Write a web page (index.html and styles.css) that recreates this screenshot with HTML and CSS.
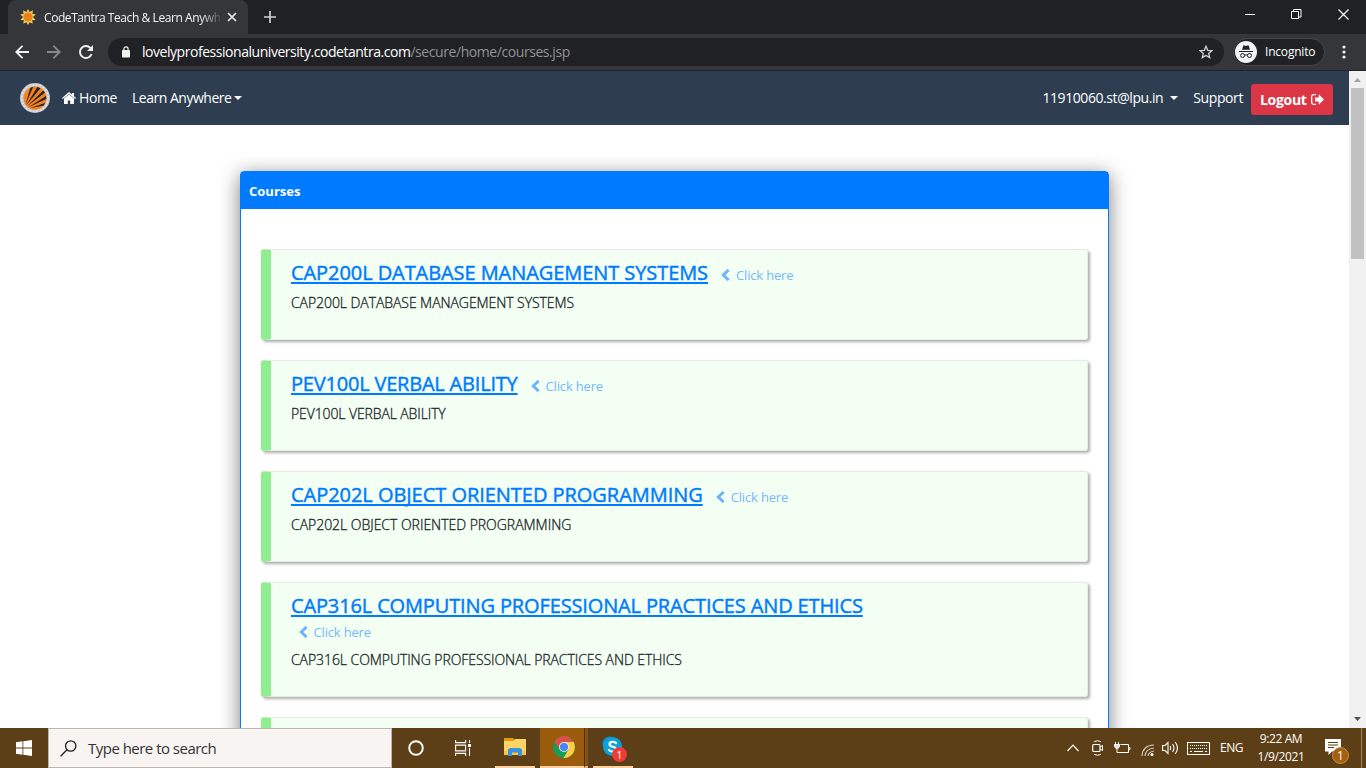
FILE: index.html
```html
<!DOCTYPE html>
<html lang="en">
<head>
<meta charset="utf-8">
<title>CodeTantra Teach &amp; Learn Anywhere</title>
<link rel="stylesheet" href="styles.css">
</head>
<body>
<div class="screen">
  <div class="tabstrip">
    <div class="tab">
      <svg class="favicon" width="16" height="16" viewBox="0 0 16 16"><path fill="#e8cf5a" d="M8 0l1.600 3L13 1.300l-.6 3.500 3.400.8L13 8l2.600 2.900-3.500.4.700 3.400-3.100-1.500L8 16l-1.700-2.800-3.100 1.500.7-3.400-3.500-.4L3 8 .2 5.600l3.400-.8L3 1.300 6.400 3z"/><circle cx="8" cy="8" r="4.600" fill="#ee7f1a"/></svg>
      <span class="tab-title">CodeTantra Teach &amp; Learn Anywh</span>
      <svg class="tab-close" width="10" height="10" viewBox="0 0 10 10"><path d="M1 1l8 8M9 1L1 9" stroke="#f0f0f0" stroke-width="1.700"/></svg>
    </div>
    <svg class="newtab" width="12" height="12" viewBox="0 0 12 12"><path d="M6 0v12M0 6h12" stroke="#d0d1d3" stroke-width="1.700"/></svg>
    <div class="winbtns">
      <svg width="10" height="11" viewBox="0 0 10 11"><path d="M0 5.500h10" stroke="#fff"/></svg>
      <svg width="11" height="11" viewBox="0 0 11 11"><path d="M.5 2.500h7v7h-7zM2.500 2.500v-2h7.500v7.500h-2.500" fill="none" stroke="#fff"/></svg>
      <svg width="11" height="11" viewBox="0 0 11 11"><path d="M.5.5l10 10M10.500.5l-10 10" stroke="#fff" stroke-width="1.200"/></svg>
    </div>
  </div>
  <div class="toolbar">
    <svg class="ic-back" width="14" height="14" viewBox="0 0 14 14"><path d="M14 7H1.500M7.500.8L1.300 7l6.200 6.200" fill="none" stroke="#f1f1f1" stroke-width="1.900"/></svg>
    <svg class="ic-fwd" width="14" height="14" viewBox="0 0 14 14"><path d="M0 7h12.500M6.500.8L12.700 7l-6.200 6.200" fill="none" stroke="#87888b" stroke-width="1.900"/></svg>
    <svg class="ic-reload" width="14" height="14" viewBox="0 0 14 14"><path d="M12.600 9.200A6 6 0 1 1 11.300 2.800l1 1" fill="none" stroke="#f1f1f1" stroke-width="1.900"/><path d="M14 0v6H8z" fill="#f1f1f1"/></svg>
    <div class="omnibox">
      <svg width="8" height="12" viewBox="0 0 8 12"><rect y="4" width="8" height="7.500" rx=".8" fill="#f1f1f1"/><path d="M1.900 4.500V2.900a2.100 2.100 0 0 1 4.200 0v1.600" fill="none" stroke="#f1f1f1" stroke-width="1.200"/></svg>
      <span class="url"><span class="host">lovelyprofessionaluniversity.codetantra.com</span><span class="path">/secure/home/courses.jsp</span></span>
      <svg class="star" width="14" height="14" viewBox="0 0 14 14"><path d="M7 1.300l1.700 4 4.300.3-3.300 2.800 1 4.200L7 10.400l-3.700 2.200 1-4.200L1 5.600l4.300-.3z" fill="none" stroke="#d2d3d5" stroke-width="1.300"/></svg>
    </div>
    <div class="incognito">
      <svg width="22" height="22" viewBox="0 0 22 22"><circle cx="11" cy="11" r="11" fill="#f1f3f4"/><path fill="#202124" d="M7 8.800l1.300-4c.2-.5.600-.6 1-.4l1.700.6 1.700-.6c.4-.2.800-.1 1 .4l1.300 4zM4 10h14v1H4z"/><g fill="none" stroke="#202124" stroke-width="1"><circle cx="7.600" cy="14.500" r="2"/><circle cx="14.400" cy="14.500" r="2"/><path d="M9.600 14.200q1.400-.8 2.800 0"/></g></svg>
      <span>Incognito</span>
    </div>
    <svg class="dots" width="4" height="14" viewBox="0 0 4 14" fill="#f1f1f1"><circle cx="2" cy="2" r="1.600"/><circle cx="2" cy="7" r="1.600"/><circle cx="2" cy="12" r="1.600"/></svg>
  </div>

  <div class="viewport">
    <div class="page">
      <nav class="navbar">
        <svg class="logo" width="30" height="30" viewBox="0 0 30 30"><circle cx="15" cy="15" r="15" fill="#c9c9ca"/><circle cx="15" cy="15" r="13.300" fill="none" stroke="#e4e4e4" stroke-width="1.500" stroke-dasharray="2 1.500"/><circle cx="15" cy="15" r="11.500" fill="#f58220"/><g fill="#2a2324"><path d="M5.500 21.500L10.300 5l3-1.200z"/><path d="M6 22.500L17.300 4l3.200 1.200z"/><path d="M6.800 23.500L23.200 7.500l1.700 2.300z"/><path d="M8 24.500L26 13l.3 3z"/><path d="M10 25.200l15.300-5.400-1.500 2.600z"/></g></svg>
        <a class="home"><svg width="14" height="12" viewBox="0 0 14 12" fill="#fff"><path d="M7 0l3 2.500V1h2v3.200L14 6l-.8.900L7 1.900.8 6.900 0 6z"/><path d="M7 2.600l5 4V12H8.200V8.500H5.800V12H2V6.600z"/></svg><span class="t-home">Home</span></a>
        <a class="learn"><span class="t-learn">Learn Anywhere</span><i class="caret"></i></a>
        <a class="user"><span class="t-user">11910060.st@lpu.in</span><i class="caret"></i></a>
        <a class="support">Support</a>
        <a class="logout"><span>Logout</span><svg width="13" height="11" viewBox="0 0 13 11"><path d="M5 .7H2.500A1.800 1.800 0 0 0 .7 2.500v6a1.800 1.800 0 0 0 1.800 1.800H5" fill="none" stroke="#fff" stroke-width="1.300"/><path fill="#fff" d="M13 5.500L7.700.2v3.200H4v4.200h3.700v3.200z"/></svg></a>
      </nav>
      <main class="card">
        <h1 class="card-head">Courses</h1>
        <div class="card-body">
          <section class="course"><div class="row"><a class="title c1">CAP200L DATABASE MANAGEMENT SYSTEMS</a><span class="hint"><svg width="9" height="12" viewBox="0 0 9 12"><path d="M7.600.9L2.300 6l5.300 5.100" fill="none" stroke="#70b3fa" stroke-width="2.900"/></svg><span>Click here</span></span></div><p class="d1">CAP200L DATABASE MANAGEMENT SYSTEMS</p></section>
          <section class="course"><div class="row"><a class="title c2">PEV100L VERBAL ABILITY</a><span class="hint"><svg width="9" height="12" viewBox="0 0 9 12"><path d="M7.600.9L2.300 6l5.300 5.100" fill="none" stroke="#70b3fa" stroke-width="2.900"/></svg><span>Click here</span></span></div><p class="d2">PEV100L VERBAL ABILITY</p></section>
          <section class="course"><div class="row"><a class="title c3">CAP202L OBJECT ORIENTED PROGRAMMING</a><span class="hint"><svg width="9" height="12" viewBox="0 0 9 12"><path d="M7.600.9L2.300 6l5.300 5.100" fill="none" stroke="#70b3fa" stroke-width="2.900"/></svg><span>Click here</span></span></div><p class="d3">CAP202L OBJECT ORIENTED PROGRAMMING</p></section>
          <section class="course tall"><div class="row"><a class="title c4">CAP316L COMPUTING PROFESSIONAL PRACTICES AND ETHICS</a></div><div class="hint wrapped"><svg width="9" height="12" viewBox="0 0 9 12"><path d="M7.600.9L2.300 6l5.300 5.100" fill="none" stroke="#70b3fa" stroke-width="2.900"/></svg><span>Click here</span></div><p class="d4">CAP316L COMPUTING PROFESSIONAL PRACTICES AND ETHICS</p></section>
          <section class="course"></section>
        </div>
      </main>
    </div>
    <div class="scrollbar">
      <svg width="17" height="17" viewBox="0 0 17 17"><path d="M5 11l3.500-4 3.500 4z" fill="#a3a3a3"/></svg>
      <div class="thumb"></div>
      <svg class="down" width="17" height="17" viewBox="0 0 17 17"><path d="M5 6l3.500 4L12 6z" fill="#505050"/></svg>
    </div>
  </div>

  <div class="taskbar">
    <div class="start"><svg width="16" height="16" viewBox="0 0 16 16" fill="#fff"><path d="M0 2.200L6.500 1.300v6.200H0zM7.300 1.200L16 0v7.500H7.300zM0 8.400h6.500v6.300L0 13.800zM7.300 8.400H16V16l-8.700-1.200z"/></svg></div>
    <div class="search"><svg width="17" height="17" viewBox="0 0 17 17"><circle cx="10.700" cy="6" r="5.200" fill="none" stroke="#222" stroke-width="1.300"/><path d="M7 9.700L.6 16.200" stroke="#222" stroke-width="1.300"/></svg><span>Type here to search</span></div>
    <div class="app w48"><svg width="16" height="16" viewBox="0 0 16 16"><circle cx="8" cy="8" r="6.800" fill="none" stroke="#fff" stroke-width="1.900"/></svg></div>
    <div class="app w47"><svg width="17" height="16" viewBox="0 0 17 16"><g fill="none" stroke="#fff" stroke-width="1.100"><path d="M.6 0v2.600h10V0M.6 5.100h10v5.800H.6zM.6 16v-2.600h10V16M14.500 0v3M14.500 8v8"/></g><path fill="#fff" d="M13 4h3v3h-3z"/></svg></div>
    <div class="app folder"><svg width="22" height="18" viewBox="0 0 22 18"><path fill="#e09c0c" d="M0 0h9l1.500 1.500V4H0z"/><path fill="#fdd466" d="M0 3h9.500l1.500-2h11v16H0z"/><path fill="#f8c443" d="M0 13h22v4H0z"/><path fill="#3992dc" d="M4 18v-6.500L6 10h10l2 1.500V18h-4v-3.500H8V18z"/></svg></div>
    <div class="app chrome"><svg width="22" height="22" viewBox="0 0 22 22"><circle cx="11" cy="11" r="11" fill="#169e58"/><path fill="#dd5144" d="M1.500 5.500A11 11 0 0 1 20.500 5.500L21 6H11L6.500 13.500z"/><path fill="#ffce44" d="M20.700 6A11 11 0 0 1 10.500 22L15.500 13.500 11 6z"/><circle cx="11" cy="11" r="5" fill="#f1f1f1"/><circle cx="11" cy="11" r="4.200" fill="#4a87f4"/></svg></div>
    <div class="edge"></div>
    <div class="app skype"><svg width="26" height="26" viewBox="0 0 26 26"><circle cx="9.500" cy="9.500" r="7" fill="#0b8fcc"/><circle cx="12.500" cy="12.500" r="9.500" fill="#08a3df"/><circle cx="16" cy="16" r="6.500" fill="#08a3df"/><path d="M16 9.200c-1.200-1.900-6.500-1.900-6.500 1 0 3.400 6.700 1.700 6.700 5 0 3.100-5.900 3-7.200.8" fill="none" stroke="#fff" stroke-width="2.200" stroke-linecap="round"/></svg><span class="badge red">1</span></div>
    <div class="tray">
      <svg class="up" width="12" height="8" viewBox="0 0 12 8"><path d="M.5 7L6 1.200 11.500 7" fill="none" stroke="#fff" stroke-width="1.200"/></svg>
      <svg class="meet" width="12" height="16" viewBox="0 0 12 16" fill="none" stroke="#fff"><rect x=".7" y="4.500" width="7.300" height="7" rx="1" stroke-width="1.200"/><path d="M8 7l2.500-1.500v5L8 9M2 1.700q3.500-2 7 0M2 14.300q3.500 2 7 0"/></svg>
      <svg class="bat" width="17" height="14" viewBox="0 0 17 14" fill="none" stroke="#fff"><path d="M6.500 3.500h8v8h-9M15 6.500h1v2h-1"/><path d="M1.500 1v2.500M4.500 1v2.500M3 7.500v4h3"/><path d="M.5 3.500h5v2L4 7.500H2L.5 5.500z" fill="#e8ddcf"/></svg>
      <svg class="wifi" width="13" height="12" viewBox="0 0 13 12" fill="none" stroke="#d6cabb" stroke-width="1.200"><path d="M1 12Q1.500 1.500 13 1M4 12Q4.500 5 13 4M7 12q.5-4 6-5"/><circle cx="11" cy="10.500" r="1.500" fill="#fff" stroke="none"/></svg>
      <svg class="vol" width="17" height="14" viewBox="0 0 17 14" fill="none" stroke="#fff" stroke-width="1.100"><path d="M.6 4.500H3l3-3v11l-3-3H.6zM8 5q1.400 2 0 4M10.500 3q3 4 0 8M13.200 1q4.500 6 0 12"/></svg>
      <svg class="keys" width="23" height="13" viewBox="0 0 23 13" fill="none" stroke="#fff"><rect x=".5" y=".5" width="22" height="12"/><path d="M3 3.500h17M3 6.500h17" stroke-dasharray="1 1"/><path d="M3 9.500h2M7 9.500h9M18 9.500h2"/></svg>
      <span class="lang">ENG</span>
      <div class="clock"><span class="time">9:22 AM</span><span class="date">1/9/2021</span></div>
      <div class="action"><svg width="16" height="16" viewBox="0 0 16 16"><path fill="#fff" d="M0 0h16v12.500H7L3.500 16v-3.500H0z"/><path d="M3 3.500h10M3 6h10M3 8.500h6" stroke="#5c3e17"/></svg><span class="badge amber">1</span></div>
      <div class="peek"></div>
    </div>
  </div>
</div>
</body>
</html>
```
FILE: styles.css
```css
* { box-sizing: border-box; }
body { margin: 0; overflow: hidden; font-family: "Open Sans", "Noto Sans", sans-serif; }
svg { display: block; flex: none; }
span, a { white-space: nowrap; }
.screen { width: 1366px; height: 768px; display: flex; flex-direction: column; overflow: hidden; background: #fff; }

.tabstrip { height: 34px; flex: none; background: #202124; display: flex; padding-left: 8px; }
.tab { width: 240px; background: #35363a; border-radius: 8px 8px 0 0; display: flex; align-items: center; padding: 0 11px 0 12px; color: #f4f4f4; font-size: 12px; }
.tab-title { width: 176px; margin-left: 8px; margin-right: 7px; letter-spacing: -0.42px; -webkit-mask-image: linear-gradient(90deg, #000 155px, rgba(0,0,0,.15) 176px); }
.newtab { margin: 11px 0 0 16px; }
.winbtns { margin: 9px 17px 0 auto; display: flex; gap: 36px; }

.toolbar { height: 37px; flex: none; background: #35363a; border-bottom: 1px solid #212225; display: flex; align-items: center; padding-left: 15px; }
.ic-fwd { margin-left: 18px; }
.ic-reload { margin-left: 18px; }
.omnibox { width: 1116px; height: 28px; margin-left: 15px; border-radius: 14px; background: #202124; display: flex; align-items: center; padding: 0 11px 0 14px; }
.url { margin: -1px 0 0 12px; font-size: 14px; color: #919294; }
.host { color: #fff; letter-spacing: -0.46px; }
.path { letter-spacing: -0.43px; }
.star { margin-left: auto; }
.incognito { margin-left: 9px; width: 92px; height: 28px; border: 1px solid #45464a; border-radius: 14px; background: #202124; display: flex; align-items: center; padding-left: 1px; font-size: 12px; color: #fff; }
.incognito span { margin: -1px 0 0 8px; letter-spacing: -0.2px; }
.dots { margin-left: 17px; }

.viewport { flex: none; height: 657px; display: flex; overflow: hidden; }
.page { width: 1349px; overflow: hidden; }
.navbar { height: 54px; background: #2e3e50; display: flex; align-items: center; padding: 0 16px 0 20px; color: #fff; font-size: 14px; }
.navbar a { display: flex; align-items: center; }
.home { margin: -1px 0 0 12px; }
.t-home { margin-left: 3px; letter-spacing: -0.4px; }
.learn { margin: -1px 0 0 15px; }
.t-learn { letter-spacing: -0.48px; }
.caret { border: 4.500px solid transparent; border-top: 4px solid #fff; border-bottom: 0; margin-left: 3px; }
.user { margin: -1px 0 0 auto; }
.t-user { letter-spacing: -0.42px; }
.user .caret { margin-left: 7px; }
.support { margin: -1px 0 0 15px; letter-spacing: -0.4px; }
.logout { margin-left: 8px; margin-top: 2px; width: 82px; height: 31px; background: #dc3545; border-radius: 3px; font-weight: 700; padding-left: 9px; letter-spacing: -0.3px; }
.logout svg { margin-left: 4px; }

.card { margin: 46px 0 0 240px; width: 869px; height: 900px; border: 1px solid #007bff; border-radius: 4px; box-shadow: 0 4px 20px rgba(0,0,0,.52); background: #fff; }
.card-head { margin: 0; height: 37px; background: #007bff; color: #fff; font-size: 13px; line-height: 39px; font-weight: 700; padding-left: 8px; }
.card-body { padding: 40px 20px 0 20px; display: flex; flex-direction: column; gap: 20px; }
.course { height: 91px; border: 1px solid #e7ebe7; border-left: 10px solid #90ee90; border-radius: 3px; background: #f2fff2; box-shadow: 2px 2px 3px rgba(0,0,0,.32); padding: 8px 20px 0; }
.course.tall { height: 115px; }
.row { height: 30px; display: flex; align-items: center; }
.title { font-size: 20px; line-height: 30px; -webkit-text-stroke: .45px #007bff; color: #007bff; text-decoration: underline; text-decoration-thickness: 2px; text-underline-offset: 2px; text-decoration-skip-ink: none; }
.c1 { letter-spacing: -0.07px; }
.c2 { letter-spacing: -0.2px; }
.c3 { letter-spacing: -0.04px; }
.c4 { letter-spacing: -0.135px; }
.hint { margin: 4px 0 0 13px; display: flex; align-items: center; gap: 6px; font-size: 13px; line-height: 18px; letter-spacing: -0.17px; color: #79b8fa; }
.hint.wrapped { margin: 2px 0 9px 7.500px; }
.course p { margin: 5px 0 0; font-size: 14px; line-height: 20px; font-weight: 300; -webkit-text-stroke: .3px #212529; color: #212529; white-space: nowrap; }
.course.tall p { margin-top: 7px; }
.d1, .d4 { letter-spacing: -0.07px; }
.d2 { letter-spacing: -0.11px; }
.d3 { letter-spacing: -0.03px; }
.scrollbar { width: 17px; background: #f1f1f1; display: flex; flex-direction: column; }
.thumb { width: 13px; height: 171px; margin-left: 2px; background: #c1c1c1; }
.down { margin-top: auto; }

.taskbar { height: 40px; flex: none; background: #5c3e17; display: flex; color: #fff; }
.start { width: 48px; display: flex; align-items: center; justify-content: center; }
.search { width: 344px; border: 1px solid #bcb6b0; background: #f8f4f2; display: flex; align-items: center; padding-left: 11px; color: #333; font-size: 15px; }
.search span { margin-left: 11px; letter-spacing: -0.52px; }
.app { display: flex; align-items: center; justify-content: center; }
.w48 { width: 48px; }
.w47 { width: 47px; margin-right: 8px; }
.folder { width: 40px; border-bottom: 2px solid #fdd2a0; margin-right: 5px; }
.chrome { width: 44px; background: #9b5b0c; border-bottom: 2px solid #fdd2a0; padding-left: 3px; }
.edge { width: 4px; background: #85511a; border-left: 1px solid #51320d; border-bottom: 2px solid #d9ac78; margin-right: 5px; }
.skype { width: 40px; border-bottom: 2px solid #fdd2a0; position: relative; }
.badge { position: absolute; border-radius: 50%; color: #fff; text-align: center; }
.red { left: 19px; top: 19px; width: 15px; height: 15px; background: #f03c36; font-size: 11px; line-height: 15px; }
.tray { margin-left: auto; display: flex; align-items: center; }
.up { margin-right: 1px; }
.meet { margin-left: 12px; }
.bat { margin-left: 10px; }
.wifi { margin: 3px 0 0 10px; }
.vol { margin-left: 8px; }
.keys { margin-left: 8px; }
.lang { margin: -1px 0 0 10px; width: 23px; font-size: 12px; letter-spacing: -0.5px; }
.clock { margin-left: 13px; width: 50px; display: flex; flex-direction: column; align-items: center; font-size: 12px; line-height: 18px; margin-top: -1px; }
.time, .date { letter-spacing: -0.4px; }
.action { margin: 0 0 2px 19px; position: relative; }
.amber { left: 7px; top: 8px; width: 17px; height: 17px; background: #a4600d; border: 1px solid #c38f52; font-size: 12px; line-height: 15px; }
.peek { width: 1px; height: 40px; background: #9c8462; margin: 0 4px 0 20px; }
```
